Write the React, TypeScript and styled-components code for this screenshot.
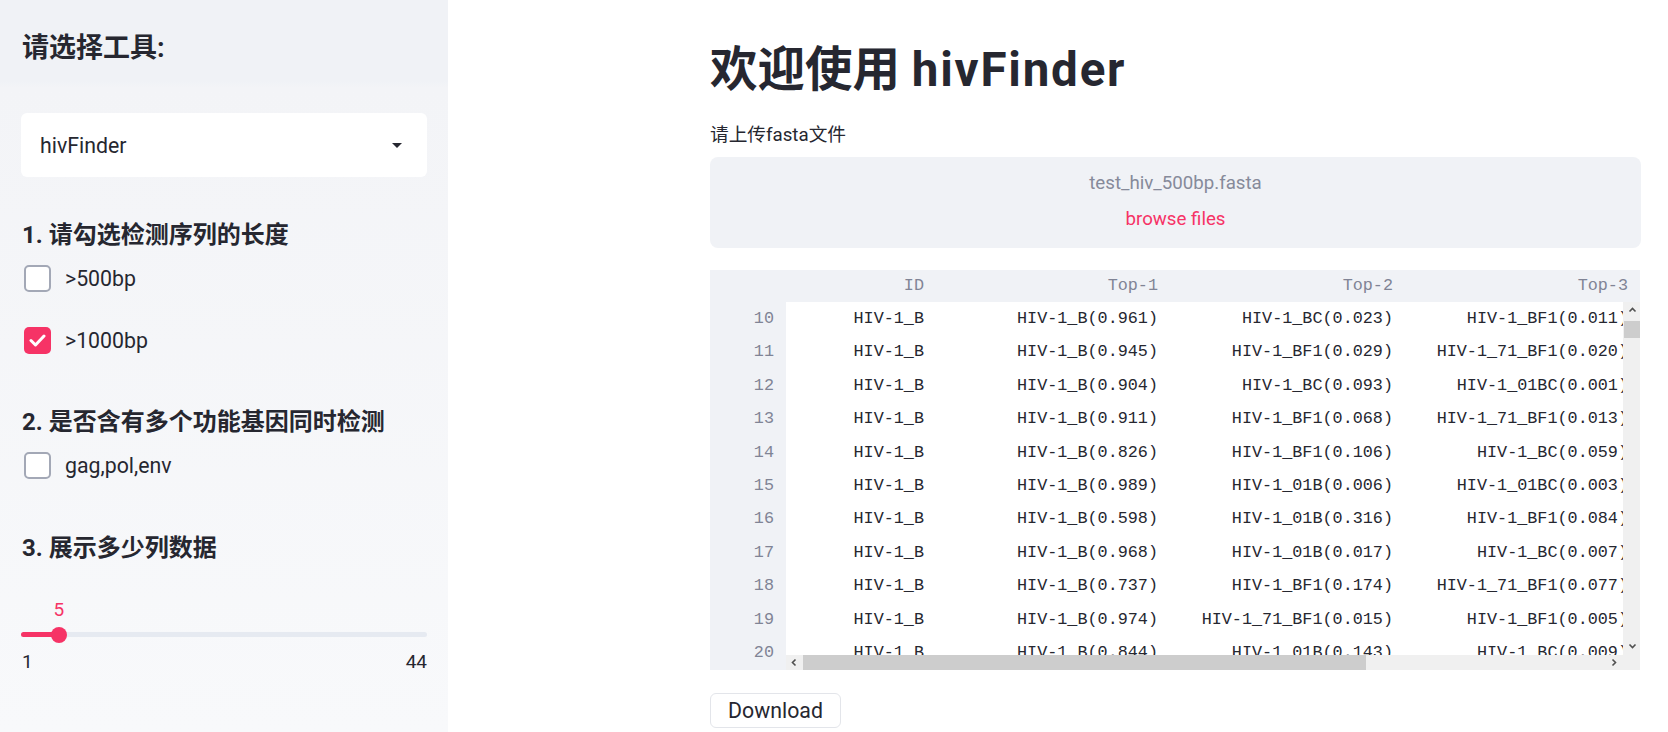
import React from "react";
import styled, { createGlobalStyle } from "styled-components";

const Global = createGlobalStyle`
  html, body { margin: 0; padding: 0; }
  body {
    width: 1668px;
    height: 732px;
    overflow: hidden;
    background: #ffffff;
    color: #262730;
    font-family: Roboto, "Noto Sans CJK SC", sans-serif;
  }
  * { box-sizing: border-box; }
`;

const Page = styled.div`
  display: flex;
  width: 1668px;
  height: 732px;
`;

const Sidebar = styled.aside`
  width: 448px;
  flex: none;
  height: 732px;
  display: flex;
  flex-direction: column;
  padding: 0 21px;
  background: linear-gradient(180deg, #f0f2f6 0%, #f0f2f6 11%, #f3f4f7 12%, #f8f9fb 100%);
`;

const SideTitle = styled.h2`
  margin: 32px 0 0 1px;
  font-size: 27px;
  line-height: 32px;
  font-weight: 700;
  letter-spacing: 0;
`;

const Select = styled.div`
  margin-top: 49px;
  height: 64px;
  background: #ffffff;
  border-radius: 6px;
  display: flex;
  align-items: center;
  justify-content: space-between;
  padding: 0 25px 0 19px;
  font-size: 21.3px;
`;

const Caret = styled.span`
  width: 0;
  height: 0;
  border-left: 5px solid transparent;
  border-right: 5px solid transparent;
  border-top: 5px solid #262730;
`;

const Heading = styled.h3<{ $mt: number }>`
  margin: ${(p) => p.$mt}px 0 0 1px;
  font-size: 24px;
  line-height: 32px;
  font-weight: 700;
`;

const CheckRow = styled.label<{ $mt: number }>`
  margin-top: ${(p) => p.$mt}px;
  height: 27px;
  display: flex;
  align-items: center;
  gap: 14px;
  padding-left: 3px;
  font-size: 21.3px;
`;

const Box = styled.span<{ $on?: boolean }>`
  width: 27px;
  height: 27px;
  flex: none;
  border-radius: 5px;
  display: flex;
  align-items: center;
  justify-content: center;
  background: ${(p) => (p.$on ? "#f63366" : "#ffffff")};
  border: ${(p) => (p.$on ? "none" : "2px solid #a3a8b6")};
`;

const SliderBlock = styled.div`
  margin-top: 34.5px;
  display: flex;
  flex-direction: column;
`;

const ValueLine = styled.div`
  height: 24px;
  position: relative;
`;

const ThumbValue = styled.span`
  position: absolute;
  top: 0;
  transform: translateX(-50%);
  font-size: 19px;
  line-height: 24px;
  color: #f63366;
`;

const Track = styled.div`
  margin-top: 4.5px;
  height: 16px;
  position: relative;
  display: flex;
  align-items: center;
`;

const Rail = styled.div`
  width: 100%;
  height: 5px;
  border-radius: 3px;
  background: #e6eaf1;
  overflow: hidden;
`;

const Fill = styled.div`
  height: 100%;
  background: #f63366;
`;

const Thumb = styled.span`
  position: absolute;
  top: 0;
  width: 16px;
  height: 16px;
  border-radius: 50%;
  background: #f63366;
  transform: translateX(-50%);
`;

const Ticks = styled.div`
  margin-top: 7px;
  display: flex;
  justify-content: space-between;
  font-size: 19px;
  line-height: 24px;
  padding-left: 1px;
`;

const Main = styled.main`
  flex: 1;
  padding: 41px 0 0 262px;
  display: flex;
  flex-direction: column;
`;

const Content = styled.div`
  width: 931px;
  display: flex;
  flex-direction: column;
`;

const Title = styled.h1`
  margin: 0;
  font-size: 47.5px;
  line-height: 58px;
  font-weight: 700;
`;

const TitleLatin = styled.span`
  letter-spacing: 1.8px;
`;

const UploadLabel = styled.div`
  margin-top: 24px;
  font-size: 18.7px;
  line-height: 24px;
`;

const Uploader = styled.div`
  margin-top: 10px;
  height: 91px;
  border-radius: 8px;
  background: #f0f2f6;
  display: flex;
  flex-direction: column;
  align-items: center;
  padding-top: 14px;
  font-size: 18.7px;
  line-height: 24px;
`;

const FileName = styled.div`
  color: #868a9a;
`;

const Browse = styled.div`
  margin-top: 12px;
  color: #f63366;
`;

const Table = styled.div`
  margin-top: 22px;
  width: 930px;
  height: 400px;
  display: grid;
  grid-template-columns: 76px 837px 17px;
  grid-template-rows: 32px 353px 15px;
  font-family: "Liberation Mono", "DejaVu Sans Mono", monospace;
  font-size: 16.8px;
  overflow: hidden;
`;

const HeaderRow = styled.div`
  grid-column: 1 / 4;
  grid-row: 1;
  background: #f0f2f6;
  display: flex;
  color: #808495;
  overflow: hidden;
`;

const Cell = styled.div<{ $w: number }>`
  width: ${(p) => p.$w}px;
  flex: none;
  text-align: right;
  padding-right: 12px;
  white-space: nowrap;
  overflow: hidden;
`;

const HeadCell = styled(Cell)`
  line-height: 32px;
`;

const IndexCol = styled.div`
  grid-column: 1;
  grid-row: 2 / 4;
  background: #f0f2f6;
  color: #808495;
  overflow: hidden;
`;

const IndexCell = styled.div`
  height: 33.4px;
  line-height: 33.4px;
  text-align: right;
  padding-right: 12px;
`;

const Body = styled.div`
  grid-column: 2;
  grid-row: 2;
  overflow: hidden;
  background: #ffffff;
`;

const Row = styled.div`
  display: flex;
  height: 33.4px;
  line-height: 33.4px;
  color: #262730;
`;

const VScroll = styled.div`
  grid-column: 3;
  grid-row: 2 / 4;
  background: #f0f0f0;
  display: flex;
  flex-direction: column;
  padding-left: 1px;
`;

const HScroll = styled.div`
  grid-column: 2;
  grid-row: 3;
  background: #f0f0f0;
  display: flex;
  align-items: stretch;
`;

const ArrowBtn = styled.div<{ $w: number; $h: number }>`
  width: ${(p) => p.$w}px;
  height: ${(p) => p.$h}px;
  flex: none;
  display: flex;
  align-items: center;
  justify-content: center;
`;

const HThumb = styled.div`
  width: 563px;
  flex: none;
  background: #cdcdcd;
`;

const HTrack = styled.div`
  flex: 1;
`;

const VThumb = styled.div`
  height: 17px;
  margin-top: 2px;
  background: #cdcdcd;
  flex: none;
`;

const VTrack = styled.div`
  flex: 1;
`;

const DownloadButton = styled.button`
  margin-top: 23px;
  width: 131px;
  height: 35px;
  border: 1px solid #e3e5ea;
  border-radius: 6px;
  background: #ffffff;
  color: #262730;
  font-family: Roboto, "Noto Sans CJK SC", sans-serif;
  font-size: 21.3px;
  padding: 0;
  display: flex;
  align-items: center;
  justify-content: center;
`;

const Chevron = ({ dir }: { dir: "up" | "down" | "left" | "right" }) => {
  const paths: Record<string, string> = {
    up: "M1.5 5.5 L4.5 2.5 L7.5 5.5",
    down: "M1.5 2.5 L4.5 5.5 L7.5 2.5",
    left: "M5.5 1.5 L2.5 4.5 L5.5 7.5",
    right: "M2.5 1.5 L5.5 4.5 L2.5 7.5",
  };
  return (
    <svg width="9" height="9" viewBox="0 0 9 9">
      <path d={paths[dir]} fill="none" stroke="#505050" strokeWidth="1.6" />
    </svg>
  );
};

const colWidths = [150, 234, 235, 235, 235];
const headers = ["ID", "Top-1", "Top-2", "Top-3", "Top-4"];
const rows: string[][] = [
  ["HIV-1_B", "HIV-1_B(0.961)", "HIV-1_BC(0.023)", "HIV-1_BF1(0.011)", "HIV-1_01B(0.003)"],
  ["HIV-1_B", "HIV-1_B(0.945)", "HIV-1_BF1(0.029)", "HIV-1_71_BF1(0.020)", "HIV-1_BC(0.004)"],
  ["HIV-1_B", "HIV-1_B(0.904)", "HIV-1_BC(0.093)", "HIV-1_01BC(0.001)", "HIV-1_01B(0.001)"],
  ["HIV-1_B", "HIV-1_B(0.911)", "HIV-1_BF1(0.068)", "HIV-1_71_BF1(0.013)", "HIV-1_BC(0.006)"],
  ["HIV-1_B", "HIV-1_B(0.826)", "HIV-1_BF1(0.106)", "HIV-1_BC(0.059)", "HIV-1_01B(0.006)"],
  ["HIV-1_B", "HIV-1_B(0.989)", "HIV-1_01B(0.006)", "HIV-1_01BC(0.003)", "HIV-1_BC(0.001)"],
  ["HIV-1_B", "HIV-1_B(0.598)", "HIV-1_01B(0.316)", "HIV-1_BF1(0.084)", "HIV-1_BC(0.001)"],
  ["HIV-1_B", "HIV-1_B(0.968)", "HIV-1_01B(0.017)", "HIV-1_BC(0.007)", "HIV-1_BF1(0.004)"],
  ["HIV-1_B", "HIV-1_B(0.737)", "HIV-1_BF1(0.174)", "HIV-1_71_BF1(0.077)", "HIV-1_BC(0.007)"],
  ["HIV-1_B", "HIV-1_B(0.974)", "HIV-1_71_BF1(0.015)", "HIV-1_BF1(0.005)", "HIV-1_BC(0.003)"],
  ["HIV-1_B", "HIV-1_B(0.844)", "HIV-1_01B(0.143)", "HIV-1_BC(0.009)", "HIV-1_BF1(0.002)"],
];

const Check = () => (
  <svg width="17" height="13" viewBox="0 0 17 13">
    <path d="M2 6.5 L6.5 11 L15 2" fill="none" stroke="#ffffff" strokeWidth="3" strokeLinecap="round" strokeLinejoin="round" />
  </svg>
);

export default function App() {
  const min = 1;
  const max = 44;
  const value = 5;
  const pct = ((value - min) / (max - min)) * 100;

  return (
    <>
      <Global />
      <Page>
        <Sidebar>
          <SideTitle>请选择工具:</SideTitle>
          <Select>
            <span>hivFinder</span>
            <Caret />
          </Select>
          <Heading $mt={41.5}>1. 请勾选检测序列的长度</Heading>
          <CheckRow $mt={14}>
            <Box />
            <span>&gt;500bp</span>
          </CheckRow>
          <CheckRow $mt={35}>
            <Box $on>
              <Check />
            </Box>
            <span>&gt;1000bp</span>
          </CheckRow>
          <Heading $mt={52}>2. 是否含有多个功能基因同时检测</Heading>
          <CheckRow $mt={14}>
            <Box />
            <span>gag,pol,env</span>
          </CheckRow>
          <Heading $mt={53}>3. 展示多少列数据</Heading>
          <SliderBlock>
            <ValueLine>
              <ThumbValue style={{ left: `${pct}%` }}>{value}</ThumbValue>
            </ValueLine>
            <Track>
              <Rail>
                <Fill style={{ width: `${pct}%` }} />
              </Rail>
              <Thumb style={{ left: `${pct}%` }} />
            </Track>
            <Ticks>
              <span>{min}</span>
              <span>{max}</span>
            </Ticks>
          </SliderBlock>
        </Sidebar>
        <Main>
          <Content>
            <Title>
              欢迎使用 <TitleLatin>hivFinder</TitleLatin>
            </Title>
            <UploadLabel>请上传fasta文件</UploadLabel>
            <Uploader>
              <FileName>test_hiv_500bp.fasta</FileName>
              <Browse>browse files</Browse>
            </Uploader>
            <Table>
              <HeaderRow>
                <Cell $w={76} />
                {headers.map((h, i) => (
                  <HeadCell key={h} $w={colWidths[i]}>
                    {h}
                  </HeadCell>
                ))}
              </HeaderRow>
              <IndexCol>
                {rows.map((_, i) => (
                  <IndexCell key={i}>{i + 10}</IndexCell>
                ))}
              </IndexCol>
              <Body>
                {rows.map((r, i) => (
                  <Row key={i}>
                    {r.map((c, j) => (
                      <Cell key={j} $w={colWidths[j]}>
                        {c}
                      </Cell>
                    ))}
                  </Row>
                ))}
              </Body>
              <VScroll>
                <ArrowBtn $w={16} $h={17}>
                  <Chevron dir="up" />
                </ArrowBtn>
                <VThumb />
                <VTrack />
                <ArrowBtn $w={16} $h={17}>
                  <Chevron dir="down" />
                </ArrowBtn>
                <ArrowBtn $w={16} $h={15} />
              </VScroll>
              <HScroll>
                <ArrowBtn $w={17} $h={15}>
                  <Chevron dir="left" />
                </ArrowBtn>
                <HThumb />
                <HTrack />
                <ArrowBtn $w={17} $h={15}>
                  <Chevron dir="right" />
                </ArrowBtn>
              </HScroll>
            </Table>
            <DownloadButton>Download</DownloadButton>
          </Content>
        </Main>
      </Page>
    </>
  );
}
